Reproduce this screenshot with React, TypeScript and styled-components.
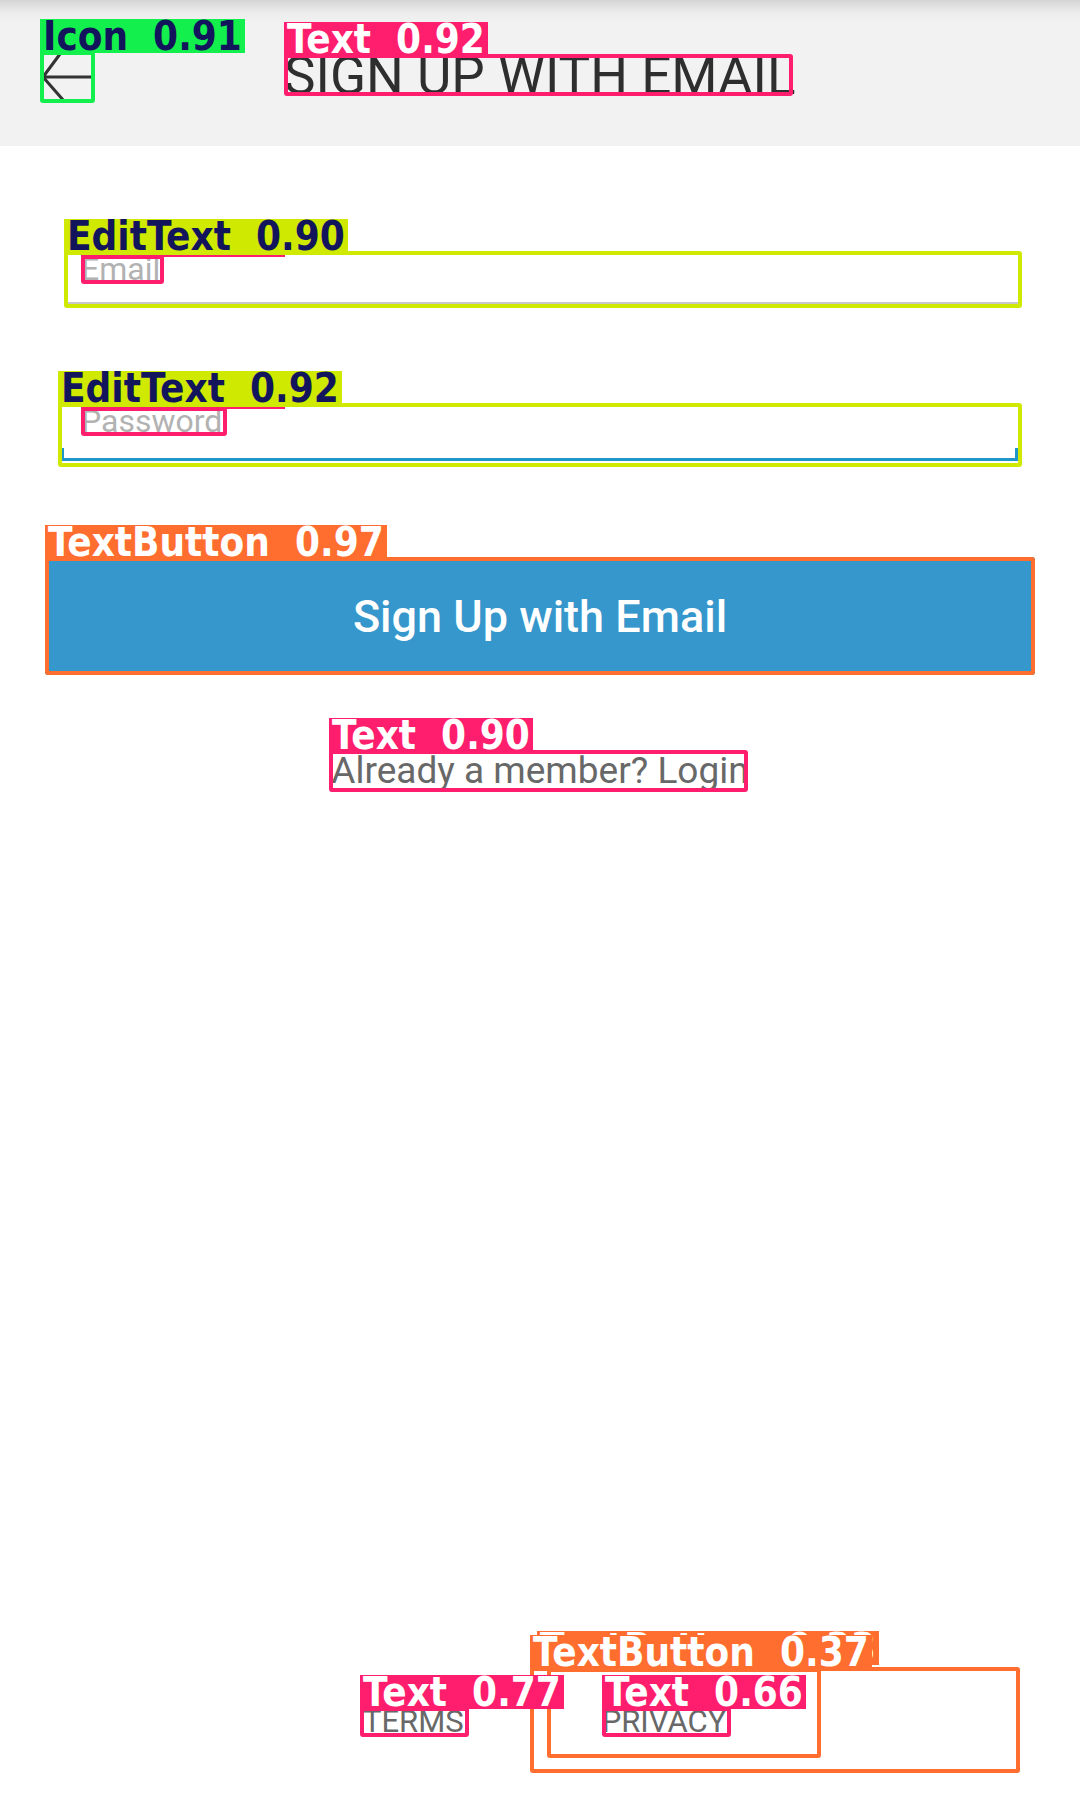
import React from 'react';
import styled, { createGlobalStyle } from 'styled-components';

const GlobalStyle = createGlobalStyle`
  html, body {
    margin: 0;
    padding: 0;
    background: #ffffff;
  }
  * {
    box-sizing: border-box;
  }
`;

type Tone = 'green' | 'lime' | 'pink' | 'orange';

const tones: Record<Tone, { line: string; ink: string }> = {
  green: { line: '#13ef4c', ink: '#12155c' },
  lime: { line: '#cfe900', ink: '#12155c' },
  pink: { line: '#ff1e6d', ink: '#ffffff' },
  orange: { line: '#ff6d2f', ink: '#ffffff' },
};

type Mark = {
  x: number;
  y: number;
  w: number;
  h: number;
  tone: Tone;
  label: string;
  // shifts the tag away from the box corner (tags hidden under other tags)
  tagDx?: number;
  tagDy?: number;
};

// detection overlay, drawn in order (later ones sit on top)
const marks: Mark[] = [
  { x: 40, y: 51, w: 55, h: 52, tone: 'green', label: 'Icon  0.91' },
  { x: 284, y: 54, w: 509, h: 42, tone: 'pink', label: 'Text  0.92' },
  { x: 81, y: 255, w: 83, h: 29, tone: 'pink', label: 'Text  0.88' },
  { x: 64, y: 251, w: 958, h: 57, tone: 'lime', label: 'EditText  0.90' },
  { x: 81, y: 407, w: 146, h: 29, tone: 'pink', label: 'Text  0.89' },
  { x: 58, y: 403, w: 964, h: 64, tone: 'lime', label: 'EditText  0.92' },
  { x: 45, y: 557, w: 990, h: 118, tone: 'orange', label: 'TextButton  0.97' },
  { x: 329, y: 750, w: 419, h: 42, tone: 'pink', label: 'Text  0.90' },
  { x: 547, y: 1668, w: 274, h: 90, tone: 'orange', label: 'TextButton  0.33', tagDx: -10, tagDy: 5 },
  { x: 530, y: 1667, w: 490, h: 106, tone: 'orange', label: 'TextButton  0.37' },
  { x: 360, y: 1707, w: 109, h: 30, tone: 'pink', label: 'Text  0.77' },
  { x: 602, y: 1707, w: 129, h: 30, tone: 'pink', label: 'Text  0.66' },
];

const App = () => {
  return (
    <>
      <GlobalStyle />
      <Page>
        <Header>
          <BackButton aria-label="Back">
            <svg width="55" height="52" viewBox="0 0 55 52" fill="none">
              <path
                d="M3 26 H52 M20 3 L3 26 L24 50"
                stroke="#333333"
                strokeWidth="3"
                strokeLinecap="round"
                strokeLinejoin="round"
              />
            </svg>
          </BackButton>
          <Title>SIGN UP WITH EMAIL</Title>
        </Header>

        <Form>
          <Field>
            <Placeholder>Email</Placeholder>
          </Field>
          <Field $active>
            <Placeholder>Password</Placeholder>
          </Field>
          <PrimaryButton>Sign Up with Email</PrimaryButton>
          <LoginLine>Already a member? Login</LoginLine>
        </Form>

        <Footer>
          <FooterLink>TERMS</FooterLink>
          <FooterLink>PRIVACY</FooterLink>
        </Footer>

        <Overlay>
          {marks.map((m, i) => (
            <Box
              key={i}
              $tone={m.tone}
              style={{ left: m.x, top: m.y, width: m.w, height: m.h }}
            >
              <Tag
                $tone={m.tone}
                style={
                  m.tagDx || m.tagDy
                    ? { transform: `translate(${m.tagDx ?? 0}px, ${-(m.tagDy ?? 0)}px)` }
                    : undefined
                }
              >
                {m.label}
              </Tag>
            </Box>
          ))}
        </Overlay>
      </Page>
    </>
  );
};

const Page = styled.div`
  position: relative;
  width: 1080px;
  min-height: 1794px;
  display: flex;
  flex-direction: column;
  font-family: Roboto, 'Noto Sans', sans-serif;
  background: #ffffff;
  overflow: hidden;
`;

const Header = styled.header`
  height: 146px;
  display: flex;
  align-items: flex-start;
  padding: 51px 0 0 40px;
  background: linear-gradient(#d4d4d4 0, #ececec 12px, #f2f2f2 24px, #f2f2f2 100%);
`;

const BackButton = styled.div`
  width: 55px;
  height: 52px;
  display: flex;
`;

const Title = styled.h1`
  margin: 4px 0 0 189px;
  font-size: 53px;
  line-height: 42px;
  font-weight: 400;
  color: #2e2e2e;
  white-space: nowrap;
`;

const Form = styled.main`
  display: flex;
  flex-direction: column;
  padding: 105px 45px 0;
`;

const Field = styled.div<{ $active?: boolean }>`
  position: relative;
  height: ${(p) => (p.$active ? 64 : 57)}px;
  margin: ${(p) => (p.$active ? '95px 13px 0 13px' : '0 13px 0 19px')};
  padding: 4px 0 0 ${(p) => (p.$active ? 23 : 17)}px;

  &::after {
    content: '';
    position: absolute;
    left: 3px;
    right: 4px;
    bottom: ${(p) => (p.$active ? 6 : 4)}px;
    height: ${(p) => (p.$active ? 10 : 2)}px;
    border: ${(p) => (p.$active ? '3px solid #1f98c9' : 'none')};
    border-top: none;
    background: ${(p) => (p.$active ? 'transparent' : '#c8c8c8')};
  }
`;

const Placeholder = styled.span`
  font-size: 32px;
  line-height: 29px;
  color: #b2b2b2;
`;

const PrimaryButton = styled.button`
  margin-top: 90px;
  height: 118px;
  border: none;
  border-radius: 3px;
  background: #3597cb;
  color: #ffffff;
  font-family: Roboto, 'Noto Sans', sans-serif;
  font-size: 45px;
  font-weight: 500;
  padding: 0;
`;

const LoginLine = styled.p`
  margin: 75px 0 0;
  text-align: center;
  font-size: 37px;
  line-height: 42px;
  color: #686868;
`;

const Footer = styled.footer`
  margin-top: auto;
  display: flex;
  gap: 138px;
  padding: 0 0 57px 363px;
`;

const FooterLink = styled.span`
  font-size: 31px;
  line-height: 30px;
  color: #686868;
`;

const Overlay = styled.div`
  position: absolute;
  inset: 0;
  pointer-events: none;
`;

const Box = styled.div<{ $tone: Tone }>`
  position: absolute;
  border: 4px solid ${(p) => tones[p.$tone].line};
  border-radius: 3px;
`;

const Tag = styled.span<{ $tone: Tone }>`
  position: absolute;
  left: -4px;
  bottom: calc(100% + 2px);
  height: 34px;
  padding: 0 3px;
  background: ${(p) => tones[p.$tone].line};
  color: ${(p) => tones[p.$tone].ink};
  font-family: 'DejaVu Sans Condensed', 'DejaVu Sans', sans-serif;
  font-weight: 700;
  font-size: 40px;
  line-height: 34px;
  white-space: pre;
`;

export default App;
